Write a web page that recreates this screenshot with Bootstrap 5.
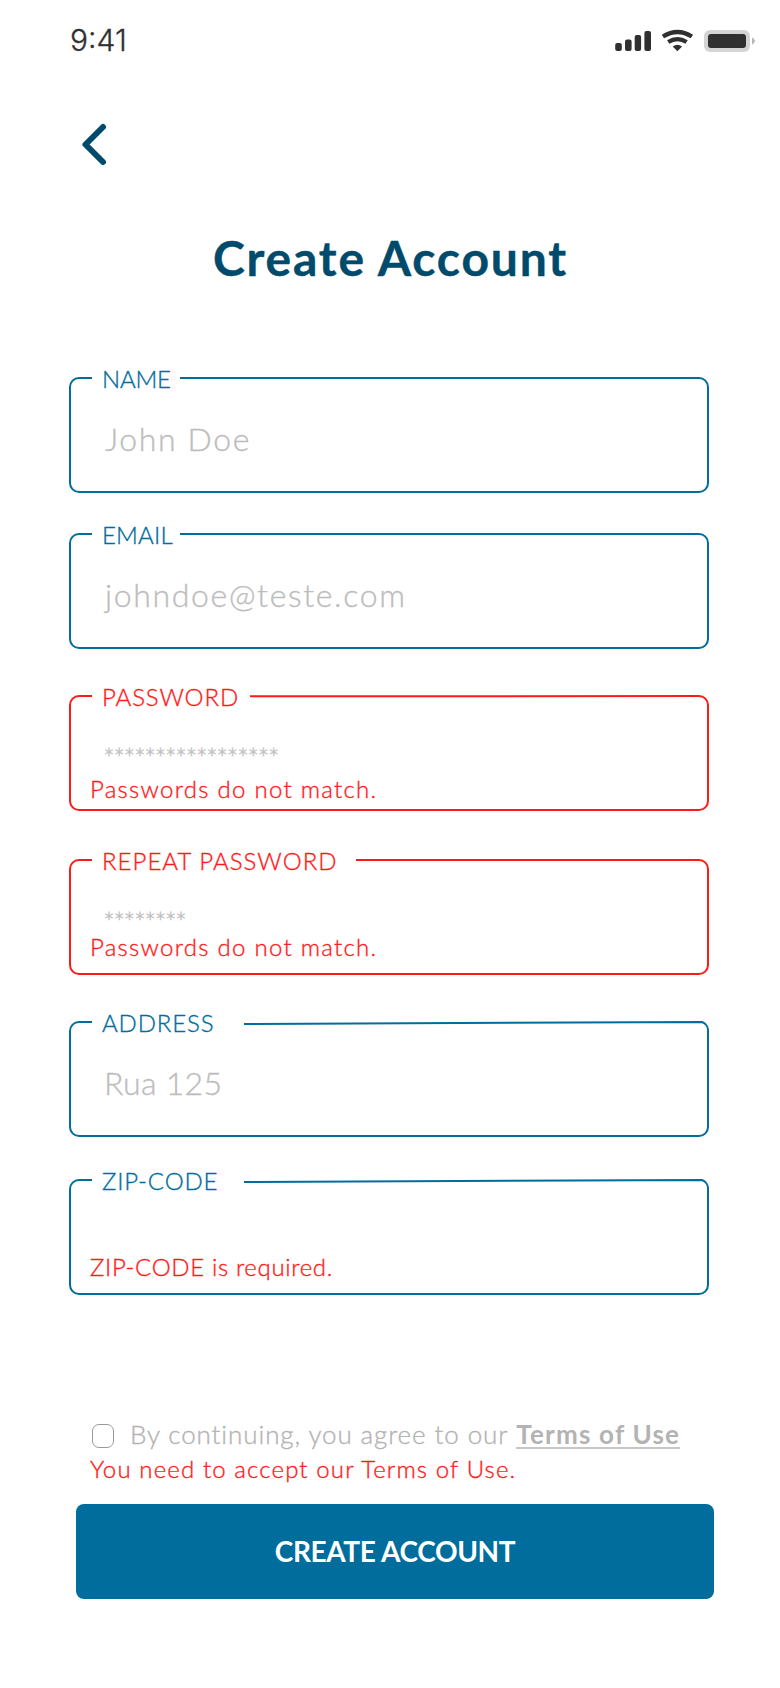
<!DOCTYPE html>
<html lang="en">
<head>
<meta charset="utf-8">
<meta name="viewport" content="width=device-width, initial-scale=1">
<title>Create Account</title>
<link href="https://cdn.jsdelivr.net/npm/bootstrap@5.3.0/dist/css/bootstrap.min.css" rel="stylesheet">
<style>
  body { font-family: Lato, "Open Sans", sans-serif; font-weight: 300; background: #fff; font-variant-ligatures: none; }
  .screen { width: 780px; height: 1688px; overflow: hidden; }
  .status-bar { height: 82px; padding: 22px 25px 0 70px; }
  .clock { font: 300 30px/36px Inter, sans-serif; color: #303030; -webkit-text-stroke: .3px #303030; }
  .status-icons { margin-top: 6px; }
  .back-link { margin: 40px 0 0 80px; width: 30px; height: 45px; }
  .page-title { margin: 61px 0 90px; height: 59px; padding-left: 1px; font-size: 48px; line-height: 59px; font-weight: 700; letter-spacing: 1.85px; color: #004a6b; -webkit-text-stroke: .4px #004a6b; }
  .form-area { width: 640px; margin-left: 69px; }
  .field { height: 116px; color: #006d9c; }
  .field.invalid { color: #ff1a1a; }
  .field + .field { margin-top: 42px; }
  .field + .field-email { margin-top: 40px; }
  .field + .field-password, .field + .field-address { margin-top: 46px; }
  .field + .field-repeat { margin-top: 48px; }
  .field-label, .field-error, .field-value { white-space: nowrap; -webkit-text-stroke: .35px currentColor; }
  .field-label { margin: -10px 0 0 33px; font-size: 24px; line-height: 24px; letter-spacing: .85px; }
  .field-value { margin: 34px 0 0 36px; height: 28px; font-size: 32px; line-height: 28px; letter-spacing: 1.65px; color: #bdbdbd; }
  .field-error { margin-left: 21px; font-size: 24px; line-height: 24px; letter-spacing: 1.27px; color: #ff1a1a; }
  .field-name .field-label { letter-spacing: -.2px; }
  .field-email .field-label { letter-spacing: .2px; }
  .field-repeat .field-label { letter-spacing: 1.02px; }
  .field-address .field-value { margin-left: 35px; letter-spacing: .3px; }
  .field-password .field-value, .field-repeat .field-value { margin-left: 34px; font-size: 28px; line-height: 29px; letter-spacing: -1.6px; }
  .field-password .field-error { margin-top: 6px; }
  .field-zip .field-error { letter-spacing: .65px; }
  .terms { margin: 128px 0 0 23px; height: 26px; font-size: 26px; line-height: 26px; letter-spacing: .9px; color: #b3b3b3; white-space: nowrap; }
  .terms-box { width: 22px; height: 24px; border: 1px solid #999; border-radius: 7px; margin: 1px 16px 0 0; }
  .terms-text { margin-top: -2px; -webkit-text-stroke: .35px currentColor; }
  .terms-link { margin: -2px 0 0 8px; height: 28px; color: #b3b3b3; font-weight: 700; letter-spacing: 1.2px; border-bottom: 2px solid #c6c6c6; text-decoration: none; }
  .terms-error { margin-top: 8px; }
  .terms-error .field-error { letter-spacing: 1.12px; }
  .submit-btn { margin: 23px 0 0 7px; padding: 0 0 2px; width: 638px; height: 95px; border: 0; border-radius: 8px; background: #006d9c; color: #fff; font-size: 28px; font-weight: 700; letter-spacing: -.37px; }
</style>
</head>
<body>
<main class="screen">
  <header class="status-bar d-flex justify-content-between align-items-start">
    <span class="clock">9:41</span>
    <svg class="status-icons" width="141" height="24" viewBox="0 0 141 24" fill="#303030" aria-hidden="true">
      <rect x="1.2" y="15" width="6.6" height="8" rx="2"/>
      <rect x="11" y="11.5" width="6.6" height="11.5" rx="2"/>
      <rect x="20.7" y="7" width="6.4" height="16" rx="2"/>
      <rect x="30.4" y="3" width="6.6" height="20" rx="2"/>
      <path d="M48.900 8.600Q63.400 -.6 77.900 8.600" fill="none" stroke="#303030" stroke-width="4.200"/>
      <path d="M54.200 14Q63.400 8.200 72.600 14" fill="none" stroke="#303030" stroke-width="4.200"/>
      <path d="M58.700 18.500Q63.400 14.900 68.100 18.500L63.400 23.200Z"/>
      <rect x="90" y="2" width="46" height="22" rx="6" fill="#d4d4d4"/>
      <rect x="94" y="6" width="38" height="14" rx="3"/>
      <path d="M138 9.300Q141 11.200 141 13T138 16.800Z" fill="#b8b8b8"/>
    </svg>
  </header>

  <a class="back-link d-block" href="#" aria-label="Back">
    <svg class="d-block" width="30" height="45" viewBox="0 0 30 45" fill="none" stroke="#004a6b" stroke-width="6" stroke-linecap="round" stroke-linejoin="round"><path d="M23 5L5.500 22.500L23 40"/></svg>
  </a>
  <h1 class="page-title text-center">Create Account</h1>

  <form class="form-area">
    <div class="field field-name position-relative d-flex flex-column">
      <svg class="position-absolute top-0 start-0" width="640" height="116" fill="none" stroke="currentColor" stroke-width="2"><path d="M23 1H10A9 9 0 0 0 1 10V106A9 9 0 0 0 10 115H630A9 9 0 0 0 639 106V10A9 9 0 0 0 630 1H111"/></svg>
      <div class="field-label">NAME</div>
      <div class="field-value">John Doe</div>
    </div>
    <div class="field field-email position-relative d-flex flex-column">
      <svg class="position-absolute top-0 start-0" width="640" height="116" fill="none" stroke="currentColor" stroke-width="2"><path d="M23 1H10A9 9 0 0 0 1 10V106A9 9 0 0 0 10 115H630A9 9 0 0 0 639 106V10A9 9 0 0 0 630 1H111"/></svg>
      <div class="field-label">EMAIL</div>
      <div class="field-value">johndoe@teste.com</div>
    </div>
    <div class="field field-password invalid position-relative d-flex flex-column">
      <svg class="position-absolute top-0 start-0" width="640" height="116" fill="none" stroke="currentColor" stroke-width="2"><path d="M23 1H10A9 9 0 0 0 1 10V106A9 9 0 0 0 10 115H630A9 9 0 0 0 639 106V10A9 9 0 0 0 630 1L181 1.300"/></svg>
      <div class="field-label">PASSWORD</div>
      <div class="field-value">*****************</div>
      <div class="field-error">Passwords do not match.</div>
    </div>
    <div class="field field-repeat invalid position-relative d-flex flex-column">
      <svg class="position-absolute top-0 start-0" width="640" height="116" fill="none" stroke="currentColor" stroke-width="2"><path d="M23 1H10A9 9 0 0 0 1 10V106A9 9 0 0 0 10 115H630A9 9 0 0 0 639 106V10A9 9 0 0 0 630 1H287"/></svg>
      <div class="field-label">REPEAT PASSWORD</div>
      <div class="field-value">********</div>
      <div class="field-error">Passwords do not match.</div>
    </div>
    <div class="field field-address position-relative d-flex flex-column">
      <svg class="position-absolute top-0 start-0" width="640" height="116" fill="none" stroke="currentColor" stroke-width="2"><path d="M23 1H10A9 9 0 0 0 1 10V106A9 9 0 0 0 10 115H630A9 9 0 0 0 639 106V10A9 9 0 0 0 633 1L175 3"/></svg>
      <div class="field-label">ADDRESS</div>
      <div class="field-value">Rua 125</div>
    </div>
    <div class="field field-zip position-relative d-flex flex-column">
      <svg class="position-absolute top-0 start-0" width="640" height="116" fill="none" stroke="currentColor" stroke-width="2"><path d="M23 1H10A9 9 0 0 0 1 10V106A9 9 0 0 0 10 115H630A9 9 0 0 0 639 106V10A9 9 0 0 0 633 1L175 3"/></svg>
      <div class="field-label">ZIP-CODE</div>
      <div class="field-value"></div>
      <div class="field-error">ZIP-CODE is required.</div>
    </div>

    <div class="terms d-flex align-items-start">
      <span class="terms-box flex-shrink-0"></span>
      <span class="terms-text">By continuing, you agree to our</span>
      <a class="terms-link" href="#">Terms of Use</a>
    </div>
    <div class="terms-error"><div class="field-error">You need to accept our Terms of Use.</div></div>
    <button type="button" class="submit-btn btn">CREATE ACCOUNT</button>
  </form>
</main>
<script src="https://cdn.jsdelivr.net/npm/bootstrap@5.3.0/dist/js/bootstrap.bundle.min.js"></script>
</body>
</html>
